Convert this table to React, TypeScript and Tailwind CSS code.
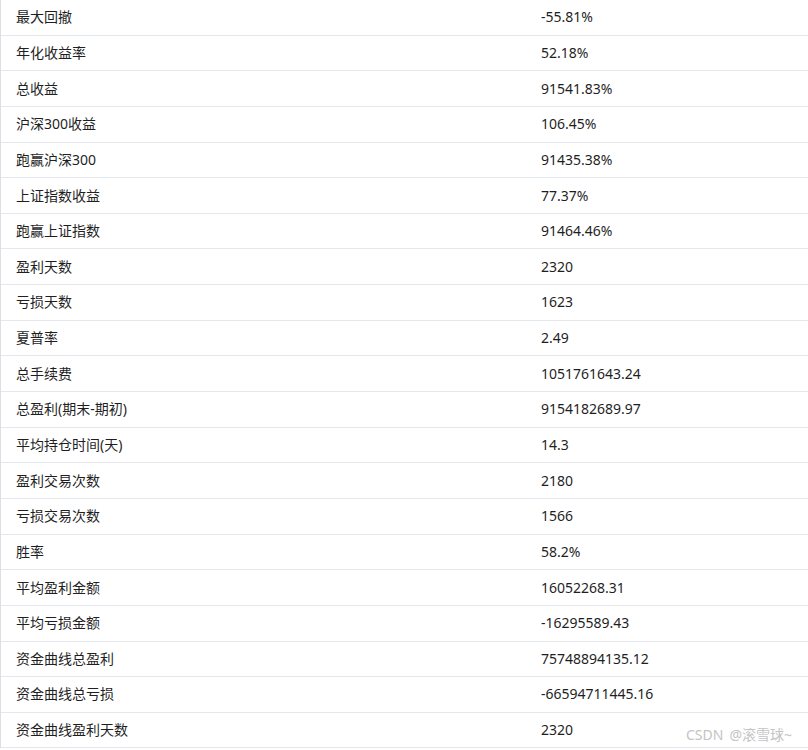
import React from "react";

const rows: [string, string][] = [
  ["最大回撤", "-55.81%"],
  ["年化收益率", "52.18%"],
  ["总收益", "91541.83%"],
  ["沪深300收益", "106.45%"],
  ["跑赢沪深300", "91435.38%"],
  ["上证指数收益", "77.37%"],
  ["跑赢上证指数", "91464.46%"],
  ["盈利天数", "2320"],
  ["亏损天数", "1623"],
  ["夏普率", "2.49"],
  ["总手续费", "1051761643.24"],
  ["总盈利(期末-期初)", "9154182689.97"],
  ["平均持仓时间(天)", "14.3"],
  ["盈利交易次数", "2180"],
  ["亏损交易次数", "1566"],
  ["胜率", "58.2%"],
  ["平均盈利金额", "16052268.31"],
  ["平均亏损金额", "-16295589.43"],
  ["资金曲线总盈利", "75748894135.12"],
  ["资金曲线总亏损", "-66594711445.16"],
  ["资金曲线盈利天数", "2320"],
];

export default function App() {
  return (
    <div
      className="relative w-[808px] h-[750px] bg-white overflow-hidden text-[14px] text-[#1f1f1f]"
      style={{ fontFamily: '"Noto Sans", "Noto Sans CJK SC", sans-serif' }}
    >
      <div className="border-l border-[#dcdfe6]">
        {rows.map(([k, v]) => (
          <div
            key={k}
            className="flex items-center h-[35.65px] border-b border-[#e4e7ed] pb-[1px]"
          >
            <div className="w-[525px] pl-[15px]">{k}</div>
            <div className="pl-[15px]">{v}</div>
          </div>
        ))}
      </div>
      <div className="absolute left-[686px] top-[724px] flex gap-[6px] text-[14px] text-[#c4c4c4]">
        <span>CSDN</span>
        <span>@滚雪球~</span>
      </div>
    </div>
  );
}
